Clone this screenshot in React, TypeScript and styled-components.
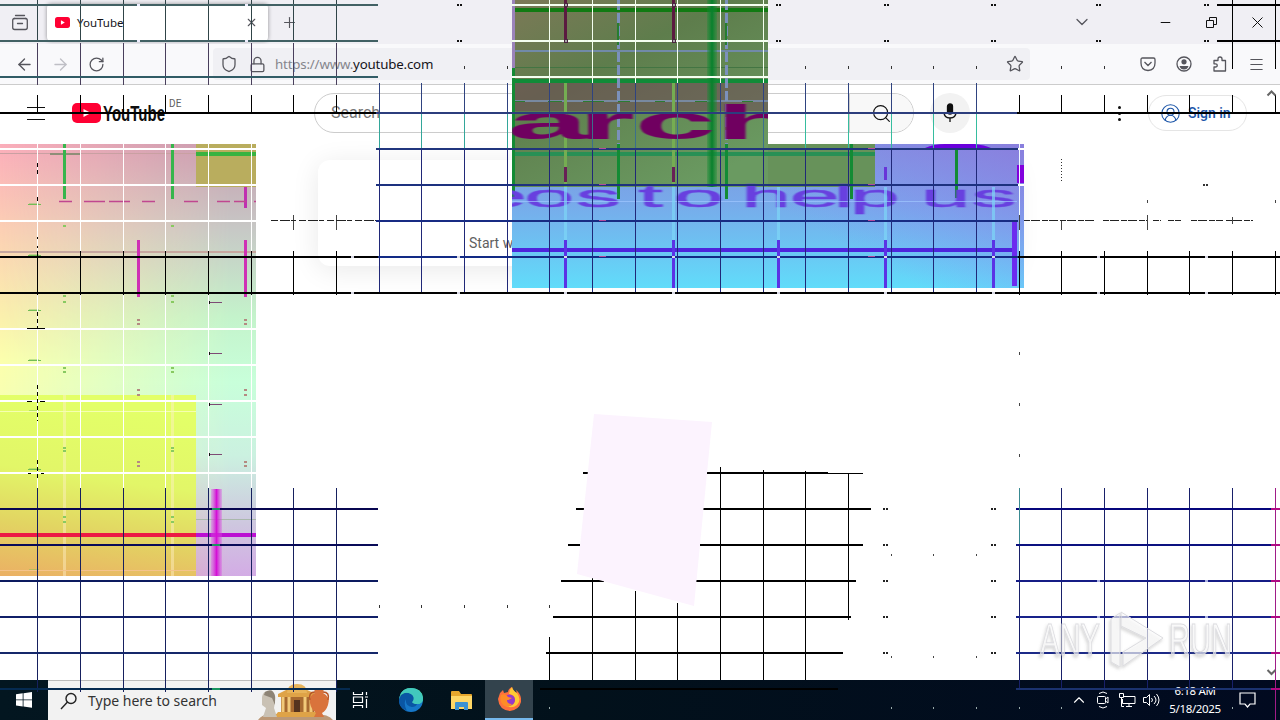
import styled, {createGlobalStyle} from "styled-components"
import {
    ArrowLeft, ArrowRight, ChevronDown, ChevronUp, Lock, Menu,
    Minus, Plus, RotateCw, Search, Shield, Star, X, CircleUserRound,
} from "lucide-react"

const GlobalStyle = createGlobalStyle`
    * { box-sizing: border-box; }
    body {
        margin: 0;
        overflow: hidden;
        font-family: "Noto Sans", "Liberation Sans", sans-serif;
    }
`;

const Screen = styled.div`
    position: relative;
    width: 1280px;
    height: 720px;
    display: flex;
    flex-direction: column;
    overflow: hidden;
    background: #fff;
`;

const TabBar = styled.div`
    display: flex;
    align-items: center;
    height: 44px;
    background: #f0eff4;
`;

const Slot = styled.div<{w: number, color?: string}>`
    width: ${props => props.w}px;
    flex: none;
    display: grid;
    place-items: center;
    color: ${props => props.color || "#55555c"};
`;

const Tab = styled.div`
    display: flex;
    align-items: center;
    width: 221px;
    height: 37px;
    margin-left: 7px;
    padding-left: 8px;
    background: #fff;
    border-radius: 4px;
    box-shadow: 0 0 4px rgba(0, 0, 0, .4);
    font-size: 11.5px;
    color: #15141a;
    span {
        flex: 1;
        margin-left: 7px;
    }
`;

const Spacer = styled.div`
    flex: 1;
`;

const NavBar = styled.div`
    display: flex;
    align-items: center;
    height: 41px;
    padding: 0 6px;
    background: #f9f9fb;
    border-bottom: 1px solid #ccc;
`;

const UrlBox = styled.div`
    display: flex;
    align-items: center;
    width: 817px;
    height: 32px;
    margin-left: 99px;
    margin-right: 100px;
    padding-left: 2px;
    background: #f0f0f4;
    border-radius: 4px;
    font-size: 13.3px;
    color: #15141a;
    em {
        font-style: normal;
        color: #85858c;
    }
`;

const Url = styled.div`
    flex: 1;
    margin-left: 4px;
    white-space: nowrap;
    letter-spacing: -.18px;
`;

const Page = styled.div`
    flex: 1;
    display: flex;
    flex-direction: column;
`;

const Masthead = styled.div`
    display: flex;
    align-items: center;
    height: 56px;
    padding-left: 18px;
    font-family: Roboto, sans-serif;
`;

const Region = styled.div`
    align-self: flex-start;
    margin-top: 12px;
    width: 145px;
    font-size: 10px;
    line-height: 14px;
    letter-spacing: .3px;
    color: #606060;
`;

const SearchBox = styled.div`
    display: flex;
    width: 600px;
    height: 40px;
    border: 1px solid #ccc;
    border-radius: 20px;
    overflow: hidden;
    font-size: 16px;
    line-height: 38px;
    color: #777;
    padding-left: 16px;
    justify-content: space-between;
`;

const SearchButton = styled.div`
    display: grid;
    place-items: center;
    width: 64px;
    background: #f8f8f8;
    border-left: 1px solid #ccc;
    color: #111;
`;

const Mic = styled.div`
    display: grid;
    place-items: center;
    width: 40px;
    height: 40px;
    margin-left: 16px;
    border-radius: 50%;
    background: #f2f2f2;
`;

const Dots = styled.div`
    display: grid;
    gap: 3px;
    margin: 0 27px 0 148px;
    i {
        width: 3px;
        height: 3px;
        border-radius: 50%;
        background: #0f0f0f;
    }
`;

const SignIn = styled.div`
    display: flex;
    align-items: center;
    gap: 7px;
    width: 99px;
    height: 36px;
    padding-left: 11px;
    border: 1px solid #e5e5e5;
    border-radius: 18px;
    font-size: 14px;
    font-weight: 500;
    color: #1b55a8;
`;

const Notice = styled.div`
    display: flex;
    align-items: flex-end;
    width: 696px;
    height: 106px;
    margin: 19px 0 0 318px;
    padding: 0 0 14px 151px;
    border-radius: 12px;
    box-shadow: 0 4px 28px rgba(0, 0, 0, .09);
    font-family: Roboto, sans-serif;
    font-size: 14px;
    line-height: 18px;
    color: #606060;
`;

const Taskbar = styled.div`
    display: flex;
    align-items: center;
    height: 40px;
    background: linear-gradient(90deg, #031620, #02111b 45%, #010a20);
    color: #fff;
`;

const TaskSearch = styled.div`
    display: flex;
    align-items: center;
    width: 288px;
    height: 40px;
    padding-left: 12px;
    background: #f2f2f2;
    border-top: 1px solid #bbb;
    font-size: 14px;
    color: #333;
    span {
        flex: 1;
        margin-left: 10px;
        white-space: nowrap;
    }
`;

const TaskApp = styled(Slot)<{active?: boolean}>`
    height: 40px;
    background: ${props => props.active ? "#33434d" : "transparent"};
    border-bottom: ${props => props.active ? "2px solid #76b9ed" : "0"};
`;

const Clock = styled.div`
    width: 64px;
    text-align: center;
    font-size: 11.5px;
    line-height: 18px;
    letter-spacing: -.35px;
`;

const Overlay = styled.svg`
    position: absolute;
    top: 0;
    left: 0;
    pointer-events: none;
`;

const cols = [
    37, 80, 123, 165, 208, 251, 293, 336, 379, 421, 464, 507, 549, 592, 635, 677,
    720, 763, 805, 848, 891, 933, 976, 1019, 1061, 1104, 1147, 1189, 1232, 1275,
];
const colsIn = (from: number, to: number) => cols.filter(x => x >= from && x <= to);

/* [top, left, right, colour] */
const rows: [number, number, number, string][] = [
    [4, 0, 378, "#426164"], [4, 512, 768, "#f4fff0"], [4, 1217, 1280, "#000"],
    [40, 0, 378, "#426164"], [40, 512, 768, "#f4fff0"], [40, 1217, 1280, "#000"],
    [76, 0, 378, "#315c66"], [76, 512, 768, "#f4fff0"],
    [112, 0, 376, "#000"], [112, 376, 1017, "#2c3d7d"], [112, 1017, 1280, "#000"],
    [148, 0, 256, "#fff"], [148, 376, 1018, "#20357d"],
    [184, 0, 256, "#fff"], [184, 376, 1018, "#1d317f"],
    [220, 0, 256, "#fff"], [220, 376, 1018, "#182b83"],
    [256, 0, 378, "#000"], [256, 378, 1018, "#122a85"], [256, 1018, 1280, "#000"],
    [292, 0, 1280, "#000"],
    [328, 0, 256, "#fff"], [364, 0, 256, "#fff"], [400, 0, 256, "#fff"],
    [436, 0, 256, "#fff"], [472, 0, 256, "#fff"],
    [508, 0, 378, "#080650"], [508, 1016, 1280, "#06067c"],
    [544, 0, 378, "#090b58"], [544, 1016, 1280, "#0c1180"],
    [580, 0, 378, "#0c1a5f"], [580, 1016, 1280, "#151c85"],
    [616, 0, 378, "#101f68"], [616, 1016, 1280, "#18228a"],
    [652, 0, 378, "#15286a"], [652, 1016, 1280, "#1c2a88"],
    [688, 0, 350, "#052a50"], [688, 1016, 1280, "#1b326f"],
    [472, 583, 588, "#000"], [472, 707, 828, "#000"],
    [508, 576, 584, "#000"], [508, 703, 871, "#000"],
    [544, 568, 580, "#000"], [544, 700, 863, "#000"],
    [580, 561, 604, "#000"], [580, 696, 856, "#000"],
    [616, 553, 851, "#000"], [652, 546, 843, "#000"], [688, 540, 838, "#000"],
];

/* [first column, last column, top, bottom, colour] */
const columns: [number, number, number, number, string][] = [
    [37, 336, 0, 41, "#304448"], [37, 336, 43, 85, "#493f5c"],
    [549, 763, 0, 83, "#f4fff0"], [1232, 1275, 0, 69, "#000"],
    [37, 336, 95, 113, "#000"], [1019, 1275, 95, 113, "#000"],
    [379, 976, 83, 113, "#2f4380"], [379, 507, 113, 148, "#33a69a"],
    [549, 763, 113, 148, "#3b6f8c"], [805, 976, 113, 148, "#36bd9f"],
    [379, 976, 148, 294, "#202878"],
    [37, 251, 144, 251, "#fff"], [37, 336, 251, 295, "#000"],
    [1019, 1275, 251, 295, "#000"],
    [37, 251, 295, 488, "#fff"], [37, 336, 488, 692, "#16205e"],
    [1019, 1232, 488, 690, "#18206a"], [1275, 1275, 488, 720, "#a01c88"],
    [720, 720, 467, 680, "#000"], [763, 763, 470, 680, "#000"],
    [805, 805, 471, 680, "#000"], [848, 848, 474, 620, "#000"],
    [592, 592, 578, 680, "#000"], [635, 635, 591, 680, "#000"],
    [677, 677, 603, 680, "#000"], [549, 549, 637, 680, "#000"],
];

const YouTubeMark = ({w, h}: {w: number, h: number}) => (
    <svg width={w} height={h} viewBox="0 0 29 20" preserveAspectRatio="none">
        <rect width="29" height="20" rx="5" fill="#ff0033" />
        <path d="M11.5 5.8 19 10l-7.5 4.2z" fill="#fff" />
    </svg>
)

const Block = ({x, y, w, h, fill}: {x: number, y: number, w: number, h: number, fill: string}) => (
    <rect x={x} y={y} width={w} height={h} fill={fill} />
)

const LeftPatch = () => (
    <g>
        <Block x={0} y={144} w={256} h={432} fill="url(#warm)" />
        <rect x="0" y="144" width="256" height="432" fill="url(#cool)" mask="url(#fade)" />
        <Block x={0} y={395} w={196} h={181} fill="url(#lime)" />
        <Block x={196} y={144} w={60} h={43} fill="#b9ad5e" />
        <Block x={196} y={152} w={60} h={4} fill="#38b340" />
        <Block x={0} y={153} w={196} h={1} fill="#c9a0a2" />
        <Block x={50} y={153} w={30} h={2} fill="#8f8e78" />
        <Block x={0} y={251} w={256} h={2} fill="#c7a7a0" />
        {[64, 172].map(x => (
            <g key={x}>
                <Block x={x - 1} y={144} w={3} h={55} fill="#37b54c" />
                <Block x={x - 1} y={395} w={3} h={181} fill="rgba(255,240,200,.45)" />
                {[225, 295, 301, 367, 371, 447, 450, 516, 521].map(y => (
                    <Block key={y} x={x - 1} y={y} w={3} h={2} fill="#88ca61" />
                ))}
            </g>
        ))}
        {[138, 245].map(x => (
            <g key={x}>
                <Block x={x - 1} y={240} w={3} h={57} fill="#cf30b5" />
                {[319, 323, 389, 394, 461, 465].map(y => (
                    <Block key={y} x={x - 1} y={y} w={3} h={2} fill="#b48a82" />
                ))}
            </g>
        ))}
        <Block x={244} y={187} w={3} h={21} fill="#c030b0" />
        <path d="M59 201.5h13M84 201.5h21M109 201.5h21M142 201.5h13M184 201.5h14M217 201.5h13M234 201.5h12M254 201.5h2" stroke="#c04790" strokeWidth="1.500" fill="none" />
        {[204, 255, 310, 360, 411, 469, 570].map(y => (
            <g key={y}>
                <Block x={28} y={y} w={13} h={1} fill="#72bd55" />
                <Block x={29} y={y - 1} w={10} h={2} fill="rgba(114,189,85,.4)" />
            </g>
        ))}
        {[302, 353, 404, 454].map(y => (
            <g key={y}>
                <Block x={208} y={y - 1} w={2} h={3} fill="#111" />
                <Block x={210} y={y} w={12} h={1} fill="#7d4a74" />
            </g>
        ))}
        <Block x={0} y={411} w={196} h={1} fill="#f5ffb0" />
        <Block x={0} y={570} w={196} h={1} fill="#f5c38c" />
        <Block x={196} y={519} w={60} h={1} fill="#aab8ac" />
        <Block x={0} y={533} w={196} h={4} fill="#ec1a45" />
        <Block x={196} y={533} w={60} h={4} fill="#bb10d2" />
        <Block x={211} y={489} w={11} h={87} fill="url(#magenta)" />
    </g>
)

const CenterPatch = () => (
    <g>
        <Block x={512} y={144} w={512} h={144} fill="url(#sky)" />
        <rect x="768" y="144" width="256" height="144" fill="url(#violet)" />
        <Block x={512} y={0} w={256} h={187} fill="url(#olive)" />
        <Block x={768} y={144} w={107} h={43} fill="#67925a" />
        <Block x={512} y={83} w={256} h={28} fill="rgba(112,65,86,.5)" />
        <Block x={512} y={8} w={256} h={4} fill="#117a12" />
        <Block x={512} y={50} w={256} h={2} fill="#718aa8" />
        <Block x={512} y={67} w={256} h={1} fill="#437543" />
        <Block x={512} y={79} w={256} h={4} fill="#118b38" />
        <Block x={512} y={100} w={256} h={2} fill="#7889a0" />
        <Block x={512} y={152} w={363} h={4} fill="#289055" />
        <path d="M514 101.5h11M548 101.5h14M583 101.5h21M618 101.5h12M655 101.5h10M695 101.5h12M742 101.5h11" stroke="#2c7b32" />
        <Block x={707} y={0} w={10} h={187} fill="url(#greenBar)" />
        {[618, 726].map(x => (
            <g key={x}>
                <path d={`M${x + .5} 0V150`} stroke="#7b91bb" strokeWidth="3" strokeDasharray="10 3" />
                <Block x={x - 1} y={23} w={2} h={22} fill="#267d31" />
            </g>
        ))}
        <path d="M513.5 0V68" stroke="#9b83ba" strokeWidth="3" />
        <path d="M513.5 68V198M618.5 144V199M726.5 144V199M851.5 144V199M956.5 144V198" stroke="#138b34" strokeWidth="3" />
        {[565, 673].map(x => (
            <g key={x}>
                <Block x={x - 1} y={0} w={3} h={41} fill="#5b1a40" />
                <Block x={x - 1} y={83} w={3} h={104} fill="#75ad52" />
                <Block x={x - 1} y={167} w={3} h={15} fill="#682056" />
            </g>
        ))}
        <svg x="512" y="100" width="256" height="44" viewBox="512 100 256 44">
            <text
                transform="scale(3.05 1)"
                x="166.300 189.500 208 234.500"
                y="139"
                fontFamily="Liberation Sans"
                fontWeight="bold"
                fontSize="48"
                fill="#700561"
                filter="url(#soft)"
            >arch</text>
        </svg>
        <svg x="512" y="180" width="512" height="50" viewBox="512 180 512 50">
            <text
                transform="scale(2.9 1)"
                x="164.500 180.800 198.500 212 220 232.300 248 255.500 272.300 287.500 293 308 317.500 335"
                y="207"
                fontFamily="Liberation Sans"
                fontSize="31"
                fill="#683fdf"
                stroke="#683fdf"
                strokeWidth=".4"
                filter="url(#soft)"
            >eos to help us</text>
        </svg>
        <Block x={512} y={201} w={505} h={1} fill="rgba(160,200,255,.7)" />
        <Block x={512} y={248} w={505} h={4} fill="#4e24dc" />
        {[565, 673, 778, 885, 993].map(x => (
            <g key={x}>
                <Block x={x - 1} y={187} w={3} h={53} fill="rgba(126,213,247,.7)" />
                <Block x={x - 1} y={240} w={3} h={48} fill="#5b32e5" />
            </g>
        ))}
        <Block x={884} y={167} w={3} h={13} fill="#6834d8" />
        <Block x={1012} y={222} w={5} h={64} fill="#6c2bef" />
        <path d="M925 148q9-4 20-4h29q11 1 17 4z" fill="#6900dc" />
        <Block x={1017} y={165} w={7} h={18} fill="#8200dd" />
        <Block x={1019} y={144} w={1} h={144} fill="#f0faff" />
        <Block x={1018} y={148} w={6} h={2} fill="#fff" />
        <Block x={1018} y={184} w={6} h={2} fill="#fff" />
    </g>
)

const Grid = () => (
    <g shapeRendering="crispEdges">
        {columns.map(([from, to, top, bottom, color]) => colsIn(from, to).map(x => (
            <Block key={`${x}-${top}`} x={x} y={top} w={1} h={bottom - top} fill={color} />
        )))}
        {rows.map(([y, left, right, color]) => (
            <Block key={`${y}-${left}`} x={left} y={y} w={right - left} h={2} fill={color} />
        ))}
        <Block x={828} y={473} w={35} h={1} fill="#000" />
        {/* joints where the grid meets the wider cells */}
        {[138, 246].map(x => [4, 40].map(y => (
            <Block key={`${x}-${y}`} x={x - 1} y={y} w={3} h={2} fill="#eef" />
        )))}
        {[459, 778, 886, 993, 1098, 1206].map(x => [4, 40].map(y => (
            <path key={`${x}-${y}`} d={`M${x - 2} ${y + 1}h2m1 0h2`} stroke="#111" strokeWidth="2" />
        )))}
        {[565, 673].map(x => [4, 40].map(y => (
            <rect key={`${x}-${y}`} x={x - 1} y={y - 1} width="3" height="3" fill="#aaa" stroke="#4c2640" />
        )))}
        {[352, 458, 565, 673, 778, 885, 993, 1098, 1206].map(x => [256, 292].map(y => (
            <Block key={`${x}-${y}`} x={x - 1} y={y} w={3} h={2} fill="#d9d9e6" />
        )))}
        {[602, 871].map(x => [148, 184, 220, 256].map(y => (
            <Block key={`${x}-${y}`} x={x - 3} y={y} w={7} h={1} fill="#b44b9c" />
        )))}
        {[885, 993].map(x => [508, 544, 580, 616, 652].map(y => (
            <path key={`${x}-${y}`} d={`M${x - 2} ${y + 1}h2m1 0h2`} stroke="#222" strokeWidth="2" />
        )))}
        {[1098, 1206].map(x => [580, 616].map(y => (
            <Block key={`${x}-${y}`} x={x - 1} y={y} w={3} h={2} fill="#a9b0e2" />
        )))}
        {[508, 544, 580, 616, 652, 688].map(y => (
            <Block key={y} x={1271} y={y} w={9} h={2} fill="#b00a83" />
        ))}
        {[508, 544, 688].map(y => (
            <Block key={y} x={212} y={y} w={8} h={2} fill="#18945f" />
        ))}
        {[464, 507, 805, 848, 891, 933, 976, 1061, 1104].map(x => (
            <Block key={x} x={x} y={66} w={1} h={3} fill="#333" />
        ))}
        {[379, 421, 464, 507, 549].map(x => (
            <Block key={x} x={x} y={605} w={1} h={3} fill="#333" />
        ))}
        {[891, 933, 976].map(x => [554, 656].map(y => (
            <Block key={`${x}-${y}`} x={x} y={y} w={1} h={2} fill="#444" />
        )))}
        {[352, 403, 454].map(y => (
            <Block key={y} x={1019} y={y} w={1} h={3} fill="#444" />
        ))}
        {[549, 891, 933, 976, 1019, 1061, 1232].map(x => (
            <Block key={x} x={x} y={707} w={1} h={2} fill="#9aa" />
        ))}
        <path d="M1019.5 488V544" stroke="#398a92" />
        <path d="M37.5 163v11M37.5 197v5M37.5 237v2M37.5 246v2M37.5 312v16M37.5 385v36M37.5 460v18" stroke="#000" strokeDasharray="4 3" />
        <path d="M27 328.5h18M27 401.5h5M40 401.5h5M28 473.5h3M41 473.5h3" stroke="#000" strokeWidth="1" />
        <path d="M293.5 215v15M336.5 215v15M1019.5 215v15M1061.5 220v10M1147.5 215v15M1232.5 217v7M1147.5 200v3M1275.5 200v3" stroke="#444" />
        <path d="M1061.5 159v23" stroke="#333" strokeDasharray="1 2" />
        <path d="M271 220.5H376" stroke="#222" strokeDasharray="7 2 10 1 5 3" />
        <path d="M1024 220.5h72M1103 220.5h44M1153 220.5h8M1168 220.5h13M1191 220.5h32M1226 220.5h27" stroke="#222" strokeDasharray="6 1 9 2" />
        <path d="M1203 184.5h5" stroke="#333" strokeWidth="2" strokeDasharray="2 1" />
    </g>
)

const Watermark = () => (
    <g fontFamily="Liberation Sans" fontSize="44" fill="#fff" fillOpacity=".6" stroke="#dcdce0" strokeWidth="1" filter="url(#mark)">
        <text x="1040" y="655" textLength="60" lengthAdjust="spacingAndGlyphs">ANY</text>
        <path d="M1111 619v43l9 5V613zM1121 612l42 26-40 28v-14l23-14-25-12z" />
        <text x="1169" y="655" textLength="63" lengthAdjust="spacingAndGlyphs">RUN</text>
    </g>
)

const Glitch = () => (
    <Overlay width="1280" height="720" viewBox="0 0 1280 720">
        <defs>
            <linearGradient id="warm" x2="0" y2="1">
                <stop offset="0" stopColor="#fbaebb" />
                <stop offset=".2" stopColor="#fcd0b4" />
                <stop offset=".4" stopColor="#fbf0ad" />
                <stop offset=".5" stopColor="#fcffad" />
                <stop offset=".7" stopColor="#f3ffb8" />
                <stop offset="1" stopColor="#f2a86c" />
            </linearGradient>
            <linearGradient id="cool" x2="0" y2="1">
                <stop offset="0" stopColor="#c79caf" />
                <stop offset=".2" stopColor="#c7c9c6" />
                <stop offset=".4" stopColor="#c4f3cb" />
                <stop offset=".55" stopColor="#c8ffda" />
                <stop offset=".72" stopColor="#cbf1e0" />
                <stop offset=".88" stopColor="#cec7df" />
                <stop offset="1" stopColor="#d3ace5" />
            </linearGradient>
            <linearGradient id="fadeX">
                <stop offset="0" stopColor="#000" />
                <stop offset=".9" stopColor="#fff" />
            </linearGradient>
            <mask id="fade" maskUnits="userSpaceOnUse" x="0" y="144" width="256" height="432">
                <rect x="0" y="144" width="256" height="432" fill="url(#fadeX)" />
            </mask>
            <linearGradient id="lime" x1=".15" x2="0" y2="1">
                <stop offset="0" stopColor="#e3ff68" />
                <stop offset=".4" stopColor="#e2f668" />
                <stop offset=".7" stopColor="#e2d462" />
                <stop offset="1" stopColor="#ebb064" />
            </linearGradient>
            <linearGradient id="olive" x2=".7" y2="1">
                <stop offset="0" stopColor="#7c7957" />
                <stop offset=".4" stopColor="#5e7d4c" />
                <stop offset="1" stopColor="#6a9a61" />
            </linearGradient>
            <linearGradient id="sky" x2="0" y2="1">
                <stop offset="0" stopColor="#7c98dc" />
                <stop offset=".4" stopColor="#78a9ea" />
                <stop offset="1" stopColor="#61dcfa" />
            </linearGradient>
            <linearGradient id="violet" x1="0" y1="1" x2="1" y2="0">
                <stop offset=".3" stopColor="#8f88f8" stopOpacity="0" />
                <stop offset="1" stopColor="#8d78dd" stopOpacity=".8" />
            </linearGradient>
            <linearGradient id="magenta">
                <stop offset="0" stopColor="#d64de0" stopOpacity=".3" />
                <stop offset=".5" stopColor="#d410d6" />
                <stop offset="1" stopColor="#d64de0" stopOpacity=".3" />
            </linearGradient>
            <linearGradient id="greenBar">
                <stop offset="0" stopColor="#108c32" stopOpacity=".3" />
                <stop offset=".5" stopColor="#07802c" />
                <stop offset="1" stopColor="#108c32" stopOpacity=".3" />
            </linearGradient>
            <filter id="soft"><feGaussianBlur stdDeviation=".4 .6" /></filter>
            <filter id="mark"><feDropShadow dx="-1" dy="2" stdDeviation="1.5" floodColor="#777" floodOpacity=".4" /></filter>
        </defs>
        <LeftPatch />
        <CenterPatch />
        <Grid />
        <polygon points="594,414 712,422 694,606 577,574" fill="#fcf3fe" />
        <Watermark />
        <path d="M1267.5 95.5l4-4 4 4M1267.5 670l4 4 4-4" fill="none" stroke="#666" strokeWidth="2" />
    </Overlay>
)

const SearchArt = () => (
    <svg width="80" height="39" viewBox="0 0 80 39">
        <path d="M2 39q4-7 18-6h38q15 0 19 6z" fill="#bc9876" />
        <path d="M22 13 40 4l20 9v3H22zM22 31h40v5H18z" fill="#dfa347" />
        <path d="M31 12q0-9 10-9t10 9z" fill="#e8b45b" />
        <path d="M25 16h33v15H25z" fill="#a86a30" />
        <path d="M27 16v15M33 16v15M49 16v15M55 16v15" stroke="#f2c979" strokeWidth="3" />
        <path d="M38 19h6v12h-6z" fill="#55331e" />
        <path d="M6 16q1-7 8-6 7 2 5 11l-1 6 3 9H7l3-9-4-3z" fill="#c9c1b4" />
        <path d="M9 11q8-5 10 4v9l-3-7-8-3z" fill="#8d8375" />
        <path d="M58 7h10l-1 5q8 4 5 12-2 6-6 8l2 4H58l2-4q-5-4-6-10-1-8 5-10z" fill="#d9733c" />
        <path d="M59 11q-7 0-5 8M67 11q7 0 5 8" stroke="#b95627" strokeWidth="1.500" fill="none" />
    </svg>
)

const App = () => {
    return (
        <Screen>
            <GlobalStyle />
            <TabBar>
                <Slot w={40}>
                    <svg width="16" height="17" fill="none" stroke="currentColor" strokeWidth="1.300" strokeLinecap="round">
                        <path d="M3.500 1.500h9M2 4.500h12M5.500 9.500h5" />
                        <path d="M2.500 4.500Q.7 4.500.7 6.500v7q0 2 2 2h10.600q2 0 2-2v-7q0-2-1.800-2" />
                    </svg>
                </Slot>
                <Tab>
                    <YouTubeMark w={15} h={11} />
                    <span>YouTube</span>
                    <Slot w={33}><X size={13} strokeWidth={2} /></Slot>
                </Tab>
                <Slot w={42}><Plus size={17} strokeWidth={1.6} /></Slot>
                <Spacer />
                <Slot w={46}><ChevronDown size={20} strokeWidth={1.5} /></Slot>
                <Slot w={37} />
                <Slot w={46} color="#111"><Minus size={15} strokeWidth={1.6} /></Slot>
                <Slot w={46} color="#111">
                    <svg width="11" height="11" fill="none" stroke="currentColor">
                        <path d="M.5 3.5h7v7h-7zM3.5 3V.5h7v7H8" />
                    </svg>
                </Slot>
                <Slot w={46} color="#111">
                    <svg width="11" height="11" stroke="currentColor"><path d="M.5.5l10 10M10.500.5l-10 10" /></svg>
                </Slot>
            </TabBar>
            <NavBar>
                <Slot w={36}><ArrowLeft size={19} strokeWidth={1.7} /></Slot>
                <Slot w={36} color="#bfbfc5"><ArrowRight size={19} strokeWidth={1.7} /></Slot>
                <Slot w={36}><RotateCw size={17} strokeWidth={1.8} /></Slot>
                <UrlBox>
                    <Slot w={28}><Shield size={18} strokeWidth={1.7} /></Slot>
                    <Slot w={28}><Lock size={17} strokeWidth={1.8} /></Slot>
                    <Url><em>https://www.</em>youtube.com</Url>
                    <Slot w={30}><Star size={18} strokeWidth={1.7} /></Slot>
                </UrlBox>
                <Slot w={36}>
                    <svg width="16" height="15" fill="none" stroke="currentColor" strokeWidth="1.3">
                        <path d="M1 2.500Q1 1 2.500 1h11Q15 1 15 2.500V6q0 7-7 7.500Q1 13 1 6zM4.500 5 8 8.500 11.500 5" />
                    </svg>
                </Slot>
                <Slot w={36}>
                    <svg width="16" height="16" fill="none" stroke="currentColor" strokeWidth="1.3">
                        <circle cx="8" cy="8" r="7" />
                        <circle cx="8" cy="5.800" r="2.600" fill="currentColor" stroke="none" />
                        <path d="M3.500 10h9q-1 3.500-4.500 3.500T3.500 10z" fill="currentColor" stroke="none" />
                    </svg>
                </Slot>
                <Slot w={36}>
                    <svg width="16" height="16" fill="none" stroke="currentColor" strokeWidth="1.3" strokeLinejoin="round">
                        <path d="M2 4.500h4V3q0-2 2-2t2 2v1.500h3.500V15H2v-4h1.500q1.700 0 1.700-1.600T3.500 7.800H2z" />
                    </svg>
                </Slot>
                <Slot w={36}><Menu size={17} strokeWidth={1.6} /></Slot>
            </NavBar>
            <Page>
                <Masthead>
                    <Slot w={36}>
                        <svg width="18" height="13" stroke="#0f0f0f"><path d="M0 .5h18M0 6.500h18M0 12.500h18" /></svg>
                    </Slot>
                    <Slot w={18} />
                    <svg width="97" height="26" viewBox="0 -2 97 26">
                        <rect y="1" width="29" height="20" rx="5" fill="#ff0033" />
                        <path d="M11.500 7 19 11l-7.500 4z" fill="#fff" />
                        <text x="31" y="19" fontFamily="Liberation Sans" fontWeight="bold" fontSize="22" textLength="62" lengthAdjust="spacingAndGlyphs" fill="#0f0f0f">YouTube</text>
                    </svg>
                    <Region>DE</Region>
                    <SearchBox>
                        Search
                        <SearchButton><Search size={21} strokeWidth={1.3} /></SearchButton>
                    </SearchBox>
                    <Mic>
                        <svg width="14" height="20" fill="none" stroke="#0f0f0f" strokeWidth="1.300">
                            <rect x="4.500" y="1" width="5" height="10" rx="2.500" fill="#0f0f0f" />
                            <path d="M1 9q0 6 6 6t6-6M7 15v4" />
                        </svg>
                    </Mic>
                    <Dots><i /><i /><i /></Dots>
                    <SignIn><CircleUserRound size={21} strokeWidth={1.2} />Sign in</SignIn>
                </Masthead>
                <Notice>Start watching videos to help us build</Notice>
            </Page>
            <Taskbar>
                <Slot w={48} color="#fff">
                    <svg width="16" height="16" fill="currentColor">
                        <path d="M0 2.200 6.700 1.300v6.200H0zM7.500 1.200 16 0v7.500H7.500zM0 8.300h6.700v6.200L0 13.600zM7.500 8.300H16v7.500l-8.500-1.200z" />
                    </svg>
                </Slot>
                <TaskSearch>
                    <svg width="18" height="18" fill="none" stroke="#222" strokeWidth="1.400">
                        <circle cx="11" cy="6.500" r="5" /><path d="M7.500 10 1 17" />
                    </svg>
                    <span>Type here to search</span>
                    <SearchArt />
                </TaskSearch>
                <TaskApp w={48} color="#fff">
                    <svg width="17" height="16" fill="none" stroke="currentColor" strokeWidth="1.200">
                        <path d="M1.500 0v2.500h9V0M1.500 5h9v5.500h-9zM1.500 16v-2.500h9V16M14.500 0v3M14.500 7v9M13 5h3" />
                    </svg>
                </TaskApp>
                <TaskApp w={53}>
                    <svg width="24" height="24" viewBox="0 0 24 24">
                        <circle cx="12" cy="12" r="12" fill="#1677c8" />
                        <path d="M.5 9Q3 0 12 0q11 0 12 10 0 6-6 6-5 0-4-3 1-5-4-5Q4 6 .500 12z" fill="#48d18f" />
                        <path d="M2 7Q8 2 14 7q3 3 0 7 1 2 4 2-1 3-5 3-7-1-6-8Q4 15 8 23-1 19 0 11z" fill="#0a56a4" />
                        <path d="M1 7q5-4 11-1 4 3 2 7l-1 1q1 2 5 2 6 0 6-6Q22 0 12 0 4 0 1 7z" fill="#42c8bd" />
                    </svg>
                </TaskApp>
                <TaskApp w={48}>
                    <svg width="21" height="19">
                        <path d="M0 1q0-1 1-1h7l2 3h10q1 0 1 1v14H0z" fill="#e7a72d" />
                        <path d="M0 5h21v13H0z" fill="#ffd766" />
                        <path d="M4 19v-7q0-1 1-1h11q1 0 1 1v7h-4v-3H8v3z" fill="#3c92d2" />
                    </svg>
                </TaskApp>
                <TaskApp w={48} active>
                    <svg width="23" height="24" viewBox="0 0 23 24">
                        <path d="M2 6 5 3l1 3 4-1q0-3 4-5 1 4 5 6l-1-3q6 5 5 12-2 8-11 9Q1 23 0 12z" fill="#ff703d" />
                        <path d="M14 0q1 4 5 6 5 7 0 12-5 4-11 1 9 0 9-6 0-5-6-6 0-4 3-7z" fill="#ffca35" />
                        <circle cx="11.500" cy="13" r="5.500" fill="#963acb" />
                        <path d="M3 8q5-2 7 2l4 1q-3 2-5 2 0 4 5 4-4 5-9 1-4-4-2-10z" fill="#ff8c27" />
                    </svg>
                </TaskApp>
                <Spacer />
                <Slot w={24} color="#fff"><ChevronUp size={18} strokeWidth={1.500} /></Slot>
                <Slot w={24} color="#fff">
                    <svg width="12" height="18" fill="none" stroke="currentColor">
                        <rect x=".5" y="5.500" width="8" height="7" rx="1" /><path d="M8.500 8 11 6v6l-2.500-2M2 2.500q4-3 8 0M2 15.500q4 3 8 0" />
                    </svg>
                </Slot>
                <Slot w={24} color="#fff">
                    <svg width="17" height="15" fill="none" stroke="currentColor">
                        <path d="M5 3.500h11v7H3.500V6M7 13.500h6M10 11v3M.5.500h4v4h-4zM2.500 5v8.500H5" />
                    </svg>
                </Slot>
                <Slot w={24} color="#fff">
                    <svg width="17" height="14" fill="none" stroke="currentColor">
                        <path d="M.5 4.500h3l3-3v11l-3-3h-3zM8.500 5q2 2 0 4M11 3q4 4 0 8M13.500 1q5 6 0 12" />
                    </svg>
                </Slot>
                <Clock>6:18 AM<br />5/18/2025</Clock>
                <Slot w={40} color="#fff">
                    <svg width="17" height="16" fill="none" stroke="currentColor" strokeWidth="1.200">
                        <path d="M1 1h15v11h-5l-2.500 3L6 12H1z" />
                    </svg>
                </Slot>
                <Slot w={13} />
            </Taskbar>
            <Glitch />
        </Screen>
    )
}

export default App
